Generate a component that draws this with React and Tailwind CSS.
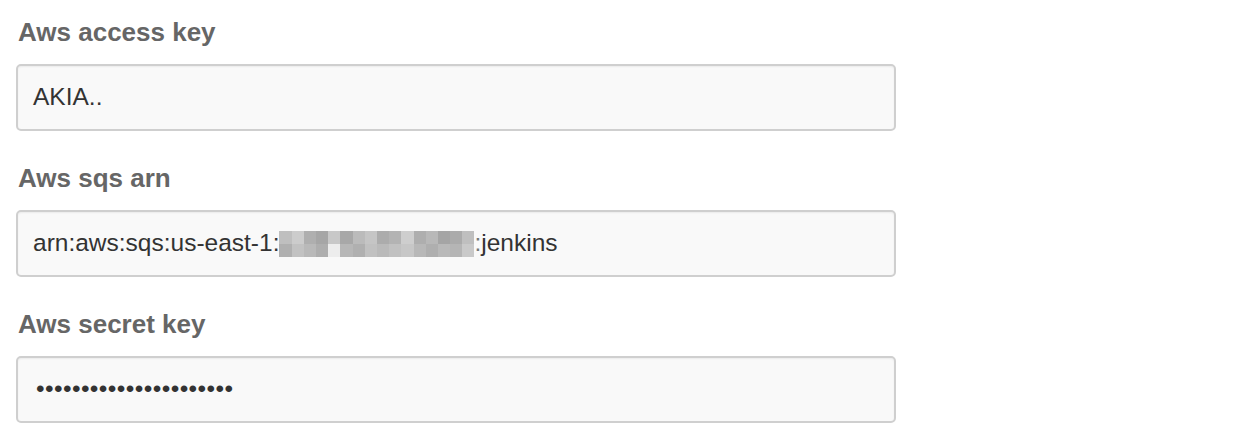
import React from "react";

const font = { fontFamily: '"Liberation Sans", Arial, Helvetica, sans-serif' };

function Field({ label, children, first }) {
  return (
    <div className={first ? "" : "mt-[31px]"}>
      <div className="h-[32px] leading-[32px] text-[26px] font-bold text-[#666] pl-[2px] mb-4">
        {label}
      </div>
      <div className="w-[880px] h-[67px] border-2 border-[#cfcfcf] rounded-[5px] bg-[#f9f9f9] shadow-[inset_0_1px_2px_rgba(0,0,0,0.06)] flex items-center pl-[15px] text-[24.5px] text-[#333]">
        {children}
      </div>
    </div>
  );
}

const blur = [
  ["#b9b9b9", "#a9a9a9"],
  ["#c8c8c8", "#bdbdbd"],
  ["#a8a8a8", "#b3b3b3"],
  ["#9e9e9e", "#a6a6a6"],
  ["#c3c3c3", "#b8b8b8"],
  ["#a0a0a0", "#b0b0b0"],
  ["#b5b5b5", "#a9a9a9"],
  ["#c0c0c0", "#bcbcbc"],
  ["#a4a4a4", "#b4b4b4"],
  ["#acacac", "#bbbbbb"],
  ["#cacaca", "#c2c2c2"],
  ["#a6a6a6", "#b1b1b1"],
  ["#b1b1b1", "#a8a8a8"],
  ["#9d9d9d", "#b3b3b3"],
  ["#a3a3a3", "#aeaeae"],
  ["#b9b9b9", "#c4c4c4"],
];

export default function App() {
  return (
    <div className="w-[1240px] h-[434px] bg-white pl-4 pt-4" style={font}>
      <Field label="Aws access key" first>
        AKIA..
      </Field>
      <Field label="Aws sqs arn">
        <span>arn:aws:sqs:us-east-1:</span>
        <span className="flex flex-col w-[195px] h-[26px] opacity-90">
          <span className="flex h-[13px]">
            {blur.map((c, i) => (
              <span key={i} className="flex-1" style={{ background: c[0] }} />
            ))}
          </span>
          <span className="flex h-[13px]">
            {blur.map((c, i) => (
              <span key={i} className="flex-1" style={{ background: i === 4 ? "#ececec" : c[1] }} />
            ))}
          </span>
        </span>
        <span className="text-[#777]">:</span>
        <span>jenkins</span>
      </Field>
      <Field label="Aws secret key">
        <span className="ml-[3px] tracking-[0.4px] text-[#333]">••••••••••••••••••••••</span>
      </Field>
    </div>
  );
}
